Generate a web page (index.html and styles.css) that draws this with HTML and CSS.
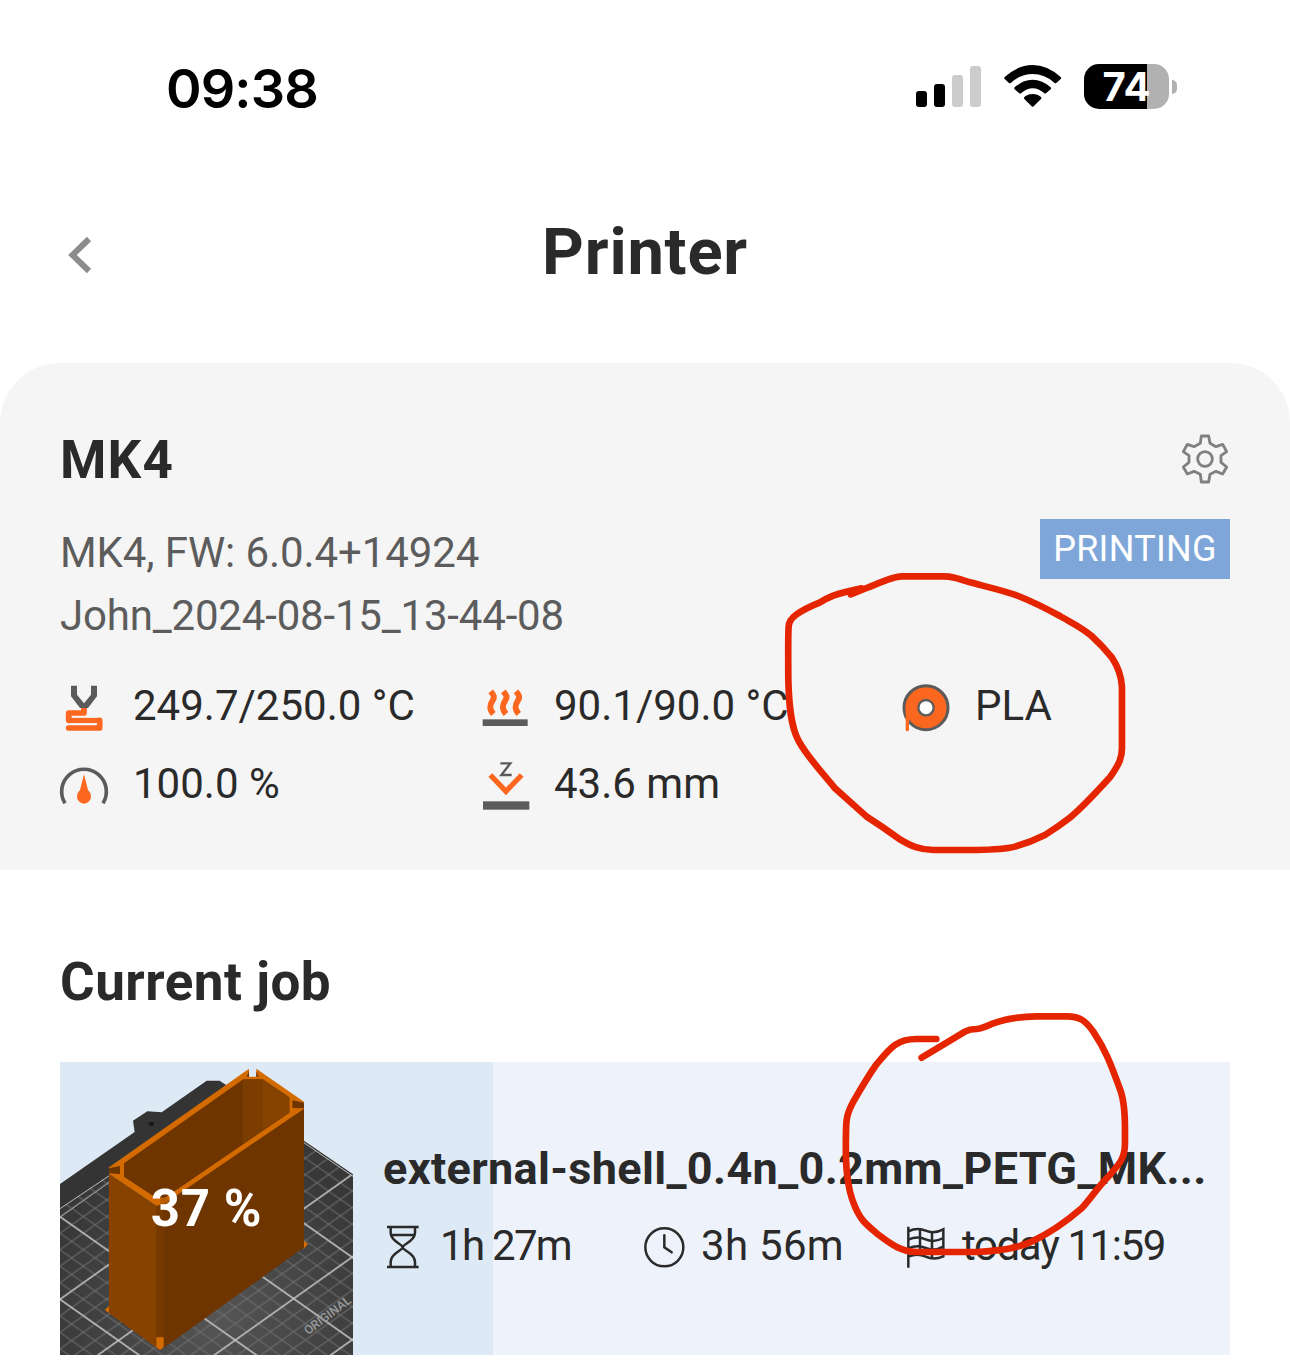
FILE: index.html
```html
<!DOCTYPE html>
<html lang="en">
<head>
  <meta charset="UTF-8">
  <title>Printer</title>
  <link rel="stylesheet" href="styles.css">
</head>
<body>
  <div class="status-bar">
    <span class="time">09:38</span>
    <div class="status-icons">
      <svg class="signal" viewBox="48 42 195 135">
        <rect x="48" y="123" width="33" height="48" rx="9"/>
        <rect x="102" y="102" width="33" height="69" rx="9"/>
        <rect x="156" y="75" width="33" height="96" rx="9" fill="#ccc"/>
        <rect x="210" y="48" width="33" height="123" rx="9" fill="#ccc"/>
      </svg>
      <svg class="wifi" viewBox="312 42 171 135">
        <path d="M314 81 Q354 45 398 45 Q442 45 482 81 Q485 84 482 87 L469 99 Q466 101 463 98 Q434 72 398 72 Q362 72 333 98 Q330 101 327 99 L314 87 Q311 84 314 81Z"/>
        <path d="M344 112 Q369 89 398 89 Q427 89 452 112 Q455 115 452 118 L438 130 Q435 132 432 129 Q416 115 398 115 Q380 115 364 129 Q361 132 358 130 L344 118 Q341 115 344 112Z"/>
        <path d="M373 141 Q383 132 398 132 Q413 132 423 141 Q426 144 423 147 L401 169 Q398 172 395 169 L373 147 Q370 144 373 141Z"/>
      </svg>
      <div class="battery">
        <div class="battery-body"><span>74</span></div>
        <div class="battery-tip"></div>
      </div>
    </div>
  </div>

  <div class="header">
    <svg class="back" viewBox="0 0 24 36"><path d="M21 2 L4.500 18 L21 34"/></svg>
    <h1>Printer</h1>
  </div>

  <div class="printer">
    <div class="printer-head">
      <h2 class="printer-name">MK4</h2>
      <svg class="gear" viewBox="483 45 147 144">
        <path d="M541 70 L544 48 H566 L570 70 L588 80 L608 73 L620 95 L603 107 V127 L620 141 L608 162 L588 154 L570 163 L566 186 H544 L541 163 L522 154 L502 162 L490 141 L507 127 V107 L490 95 L502 73 L522 80 Z"/>
        <circle cx="555" cy="117" r="22"/>
      </svg>
    </div>
    <div class="printer-info">
      <div class="info-lines">
        <p class="firmware">MK4, FW: 6.0.4+14924</p>
        <p class="serial">John_2024-08-15_13-44-08</p>
      </div>
      <span class="badge">PRINTING</span>
    </div>

    <div class="stats">
      <div class="stat">
        <svg viewBox="60 66 144 144">
          <path d="M132 143 V159 H86 V181 H179 V204 H86" fill="none" stroke="#fb671f" stroke-width="17" stroke-linejoin="round" stroke-linecap="round"/>
          <path d="M96 171 H174 M90 192 H171" stroke="#f5f5f5" stroke-width="5"/>
          <path d="M93 77 H111 V104 L132 130 L153 104 V77 H171 V109 L144 144 H120 L93 109 Z" fill="#5b5b5b"/>
        </svg>
        <span>249.7/250.0 °C</span>
      </div>
      <div class="stat">
        <svg viewBox="63 66 144 144">
          <g fill="none" stroke="#fb671f" stroke-width="18">
            <path d="M92 94 C103 107 104 112 98 121 C88 136 87 147 100 162"/>
            <path d="M130 94 C141 107 142 112 136 121 C126 136 125 147 138 162"/>
            <path d="M168 94 C179 107 180 112 174 121 C164 136 163 147 176 162"/>
          </g>
          <rect x="68" y="178" width="135" height="20" fill="#5b5b5b"/>
        </svg>
        <span>90.1/90.0 °C</span>
      </div>
      <div class="stat">
        <svg viewBox="396 366 144 144">
          <circle cx="468" cy="443" r="66" fill="#fb671f" stroke="#5b5b5b" stroke-width="9"/>
          <path d="M405 478 V516 H412 L418 484 Z" fill="#f5f5f5"/>
          <path d="M412 440 V509" stroke="#fb671f" stroke-width="10" stroke-linecap="round"/>
          <circle cx="468" cy="443" r="23" fill="#fff" stroke="#5b5b5b" stroke-width="7"/>
        </svg>
        <span>PLA</span>
      </div>
      <div class="stat">
        <svg viewBox="60 300 144 144">
          <path d="M75 430 A67 67 0 1 1 189 430" fill="none" stroke="#5b5b5b" stroke-width="11"/>
          <path d="M132 343 L144 390 Q153 398 153 410 A21 21 0 0 1 111 410 Q111 398 120 390 Z" fill="#fb671f"/>
        </svg>
        <span>100.0 %</span>
      </div>
      <div class="stat">
        <svg viewBox="63 300 144 144">
          <path d="M121 310 H151 L124 345 H155" fill="none" stroke="#5b5b5b" stroke-width="7"/>
          <path d="M91 345 L138 394 L185 345" fill="none" stroke="#fb671f" stroke-width="16"/>
          <rect x="69" y="424" width="139" height="25" fill="#5b5b5b"/>
        </svg>
        <span>43.6 mm</span>
      </div>
    </div>
  </div>

  <div class="current-job">
    <h2 class="section-title">Current job</h2>
    <div class="job">
      <div class="job-progress" style="width: 37%"></div>
      <div class="preview">
        <svg viewBox="30 36 879 879">
          <defs>
            <radialGradient id="bed" gradientUnits="userSpaceOnUse" cx="500" cy="800" r="520">
              <stop offset="0" stop-color="#555"/>
              <stop offset="1" stop-color="#383838"/>
            </radialGradient>
            <pattern id="minor" width="50" height="50" patternUnits="userSpaceOnUse" patternTransform="matrix(.701 .494 -.701 .498 30 500)">
              <path d="M0 0 H50 M0 0 V50 M0 50 H50 M50 0 V50" fill="none" stroke="#707070" stroke-width="3.500"/>
            </pattern>
            <pattern id="major" width="250" height="250" patternUnits="userSpaceOnUse" patternTransform="matrix(.701 .494 -.701 .498 30 500)">
              <path d="M0 0 H250 M0 0 V250 M0 250 H250 M250 0 V250" fill="none" stroke="#c8c8c8" stroke-width="5"/>
            </pattern>
          </defs>
          <!-- print bed -->
          <path d="M30 402 L254 246 L249 212 L292 184 L335 187 L470 92 L509 92 L560 126 L762 272 L909 373 V915 H30Z" fill="#343434"/>
          <path d="M295 216 H313 L309 228 H299Z" fill="#181818"/>
          <path d="M30 476 L470 165 L600 165 L909 378 V915 H30Z" fill="url(#bed)"/>
          <path d="M30 476 L470 165 L600 165 L909 378 V915 H30Z" fill="url(#minor)"/>
          <path d="M30 500 L470 190 L600 170 L909 378 V915 H30Z" fill="url(#major)"/>
          <path d="M30 476 L190 369 M750 270 L909 379" fill="none" stroke="#bbb" stroke-width="3"/>
          <text transform="translate(774 856) rotate(-37)" class="bed-text">ORIGINAL</text>
          <!-- printed model -->
          <path d="M164 780 L177 768 L190 798Z M762 572 L774 583 L760 598Z" fill="#d36b00"/>
          <path d="M177 352 L597 56 L597 80 H619 V56 L762 155 V178 L330 475 L177 372Z" fill="#d36b00"/>
          <path d="M222 340 L580 88 H638 L718 142 V188 L345 443 L318 443 L222 380Z" fill="#6e3500"/>
          <path d="M578 89 H638 V241 L578 283Z" fill="#7b3d00"/>
          <path d="M638 88 L718 142 V188 L638 243Z" fill="#864300"/>
          <path d="M177 355 L210 348 V372 L177 370Z M762 158 L727 151 V174 L762 175Z" fill="#6e3500"/>
          <path d="M597 64 L590 80 H597Z M619 64 L626 80 H619Z" fill="#6e3500"/>
          <path d="M177 372 L318 468 V892 L177 790Z" fill="#874200"/>
          <path d="M318 468 L342 460 V888 L330 900 L318 892Z" fill="#763a00"/>
          <path d="M342 462 L762 176 V592 L342 893Z" fill="#6f3500"/>
          <path d="M332 445 H356 V457 L330 466Z" fill="#b85c00"/>
          <path d="M319 862 H341 V892 L330 900 L319 892Z" fill="#d36b00"/>
        </svg>
        <span class="percent">37 %</span>
      </div>
      <div class="job-details">
        <h3>external-shell_0.4n_0.2mm_PETG_MK...</h3>
        <div class="job-meta">
          <div class="meta">
            <svg viewBox="39 285 120 132">
              <path d="M51 291 H146 M51 411 H146 M62 291 V308 C62 334 98 342 98 352 C98 362 62 368 62 396 V411 M135 291 V308 C135 334 98 342 98 352 C98 362 135 368 135 396 V411 M63 315 H134"/>
            </svg>
            <span class="elapsed">1h 27m</span>
          </div>
          <div class="meta">
            <svg viewBox="822 285 120 132">
              <circle cx="883" cy="352" r="57"/>
              <path d="M883 316 V352 L905 367" stroke-linecap="round"/>
            </svg>
            <span class="remaining">3h 56m</span>
          </div>
          <div class="meta">
            <svg viewBox="225 675 120 132">
              <path d="M235 680 V803 M235 694 Q262 681 287 692 Q312 703 340 688 V769 Q312 782 287 770 Q262 758 235 770 M235 719 Q262 707 287 718 Q312 729 340 714 M235 745 Q262 733 287 744 Q312 755 340 740 M270 687 V764 M306 697 V775"/>
            </svg>
            <span class="finish">today 11:59</span>
          </div>
        </div>
      </div>
    </div>
  </div>

  <!-- hand-drawn marks -->
  <svg class="marks" viewBox="0 0 1290 1371">
    <g transform="translate(770 560) scale(.3333)">
      <path d="M275 85 Q215 98 190 107 Q170 115 150 127 C85 154 56 174 56 200 Q54 220 55 360 C57 440 63 500 85 541 C110 588 150 630 195 685 Q240 725 290 770 Q340 802 385 835 C425 860 450 869 490 870 H620 Q700 869 735 860 C770 850 795 840 825 825 Q865 800 900 773 Q940 740 1020 652 C1050 610 1056 590 1056 565 V380 C1054 350 1044 320 1026 293 Q1000 260 965 228 C935 202 900 186 870 168 Q800 130 745 108 C700 91 640 78 600 67 C560 54 545 49 520 49 H395 C370 49 335 66 290 84 L242 103"/>
    </g>
    <g transform="translate(830 1000) scale(.3333)">
      <path d="M319 117 H262 C200 116 180 145 138 195 Q110 235 70 305 C50 342 48 360 48 400 C46 480 48 560 75 620 C92 660 105 670 140 700 C190 738 215 755 260 756 H440 C520 752 560 745 605 725 Q680 690 755 625 C780 598 800 566 835 530 C870 490 885 475 885 430 V385 C885 330 880 290 868 262 C845 200 830 155 790 95 C765 60 750 50 710 49 H620 C570 50 530 55 490 70 C465 82 455 86 440 87 Q420 87 405 95 L275 173"/>
    </g>
  </svg>
</body>
</html>
```
FILE: styles.css
```css
* {
  margin: 0;
  padding: 0;
  box-sizing: border-box;
}

body {
  width: 1290px;
  height: 1371px;
  background: #fff;
  color: #2a2a2a;
  font-family: Roboto, 'Liberation Sans', sans-serif;
  font-size: 42px;
  position: relative;
  overflow: hidden;
}

svg {
  display: block;
  flex-shrink: 0;
  overflow: visible;
}

span, p, h1, h2, h3 {
  white-space: nowrap;
}

/* Status bar */
.status-bar {
  height: 175px;
  padding: 59px 113px 0 166px;
  display: flex;
  justify-content: space-between;
  align-items: flex-start;
  color: #000;
  font-family: Inter, sans-serif;
}

.time {
  font-size: 54px;
  font-weight: 600;
  line-height: 60px;
  letter-spacing: -0.9px;
}

.status-icons {
  display: flex;
  margin-top: 5px;
}

.signal {
  width: 65px;
  height: 45px;
  margin-right: 23px;
}

.wifi {
  width: 57px;
  height: 45px;
  margin-right: 23px;
}

.battery {
  display: flex;
  align-items: center;
  gap: 3px;
}

.battery-body {
  width: 85px;
  height: 45px;
  border-radius: 15px;
  background: linear-gradient(90deg, #000 63px, #b1b1b1 63px);
  color: #fff;
  font-size: 40px;
  font-weight: 700;
  line-height: 45px;
  text-align: center;
}

.battery-tip {
  width: 5px;
  height: 14px;
  border-radius: 0 5px 5px 0;
  background: #b1b1b1;
}

/* Title row */
.header {
  height: 188px;
  padding: 0 68px;
  display: grid;
  grid-template-columns: 24px 1fr 24px;
}

.back {
  width: 24px;
  height: 36px;
  margin-top: 62px;
  fill: none;
  stroke: #8c8c8c;
  stroke-width: 6;
}

.header h1 {
  margin-top: 37px;
  font-size: 65px;
  line-height: 80px;
  text-align: center;
  letter-spacing: 0.8px;
}

/* Printer panel */
.printer {
  height: 507px;
  padding: 67px 60px 0;
  background: #f5f5f5;
  border-radius: 60px 60px 0 0;
}

.printer-head {
  height: 60px;
  display: flex;
  justify-content: space-between;
}

h2 {
  font-size: 53px;
  line-height: 60px;
}

.printer-name {
  letter-spacing: 1.2px;
}

.gear {
  width: 49px;
  height: 48px;
  margin-top: 5px;
  fill: none;
  stroke: #808080;
  stroke-width: 8.5;
  stroke-linejoin: round;
}

.printer-info {
  margin-top: 29px;
  display: flex;
  justify-content: space-between;
  align-items: flex-start;
  color: #5c5c5c;
}

.info-lines {
  line-height: 63px;
  margin-top: 2px;
}

.firmware {
  letter-spacing: -0.1px;
}

.serial {
  letter-spacing: -0.18px;
}

.badge {
  width: 190px;
  height: 60px;
  background: #7ea6d9;
  color: #fff;
  font-size: 36px;
  line-height: 60px;
  text-align: center;
  letter-spacing: 0.3px;
}

.stats {
  margin-top: 20px;
  display: grid;
  grid-template-columns: 421px 421px 1fr;
  grid-auto-rows: 78px;
}

.stat {
  display: flex;
  align-items: center;
  gap: 25px;
}

.stat svg {
  width: 48px;
  height: 48px;
}

.stat span {
  margin-top: -2px;
}

/* Current job */
.current-job {
  padding: 82px 60px 0;
}

.section-title {
  letter-spacing: 0.5px;
}

.job {
  height: 293px;
  margin-top: 50px;
  background: #eef3fb;
  display: flex;
  position: relative;
}

.job-progress {
  position: absolute;
  top: 0;
  left: 0;
  height: 100%;
  background: #dde9f5;
}

.preview {
  width: 293px;
  height: 293px;
  position: relative;
}

.preview svg {
  width: 293px;
  height: 293px;
  overflow: hidden;
}

.bed-text {
  font-size: 37px;
  font-weight: 500;
  fill: #999;
}

.percent {
  position: absolute;
  top: 0;
  left: 0;
  width: 100%;
  color: #fff;
  font-size: 51px;
  font-weight: 700;
  line-height: 293px;
  text-align: center;
  letter-spacing: 0.6px;
}

.job-details {
  position: relative;
  padding: 77px 0 0 30px;
}

.job-details h3 {
  font-size: 45px;
  line-height: 60px;
  letter-spacing: 0.35px;
}

.job-meta {
  margin-top: 17px;
  display: grid;
  grid-template-columns: 261px 261px 1fr;
}

.meta {
  height: 60px;
  display: flex;
  align-items: center;
  gap: 17px;
}

.meta svg {
  width: 40px;
  height: 44px;
  margin-top: 2px;
  fill: none;
  stroke: #2a2a2a;
  stroke-width: 7.5;
}

.meta span {
  margin-top: -2px;
}

.elapsed {
  letter-spacing: -1.7px;
}

.remaining {
  letter-spacing: 0.3px;
}

.finish {
  letter-spacing: -1.4px;
}

.marks {
  position: absolute;
  top: 0;
  left: 0;
  width: 1290px;
  height: 1371px;
  fill: none;
  stroke: #e52400;
  stroke-width: 20;
  stroke-linecap: round;
  stroke-linejoin: round;
  pointer-events: none;
}
```
